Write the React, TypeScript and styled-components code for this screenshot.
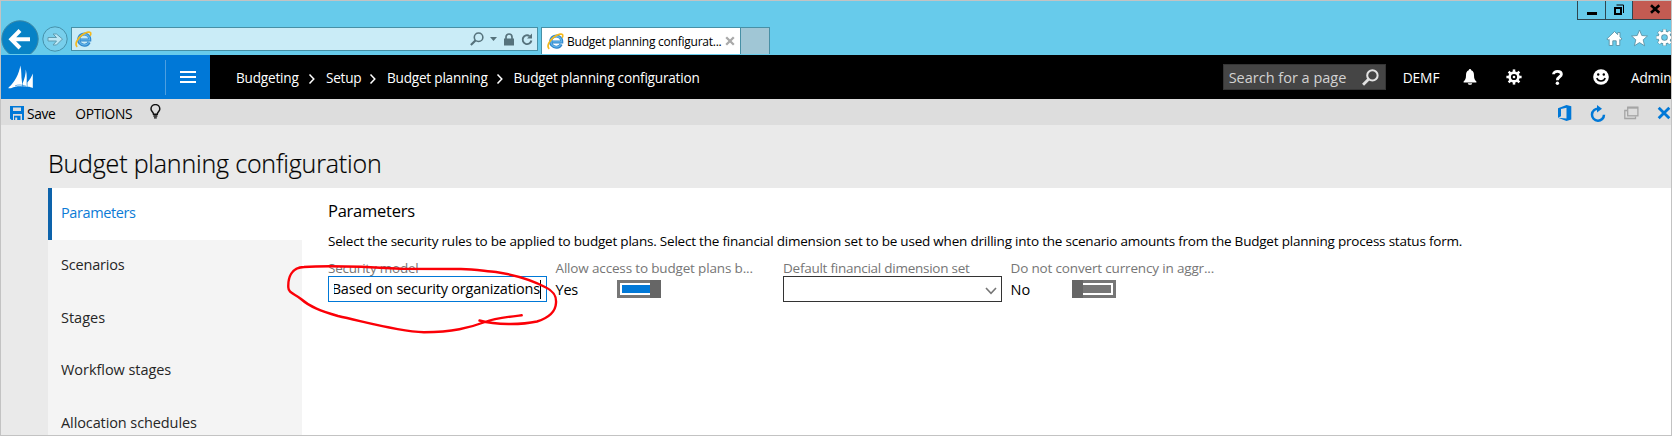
import React from 'react';
import styled, { createGlobalStyle } from 'styled-components';

const Global = createGlobalStyle`
  * { box-sizing: border-box; }
  body { margin: 0; overflow: hidden; }
  svg { display: block; flex: none; }
`;

const Window = styled.div`
  position: relative;
  display: flex;
  flex-direction: column;
  width: 1672px;
  height: 436px;
  overflow: hidden;
  border: 1px solid #c3c3c3;
  background: #eaeaea;
  color: #000;
  font-family: 'Open Sans', 'Noto Sans', sans-serif;
  white-space: nowrap;
`;

const Text = styled.span<{ $size?: number; $track?: number; $line?: number; $color?: string }>`
  font-size: ${(p) => p.$size ?? 14}px;
  letter-spacing: ${(p) => p.$track ?? 0}px;
  line-height: ${(p) => p.$line ?? 20}px;
  color: ${(p) => p.$color ?? 'inherit'};
`;

/* Browser chrome */
const Browser = styled.header`
  display: flex;
  flex: none;
  height: 54px;
  background: #67cbeb;
`;
const NavButtons = styled.div`
  width: 70px;
  padding-top: 18px;
`;
const AddressBar = styled.div`
  display: flex;
  align-items: center;
  width: 467px;
  height: 24px;
  margin-top: 26px;
  padding: 0 4px 0 3px;
  border: 1px solid #4790a6;
  background: #caecf7;
`;
const AddressTools = styled.div`
  display: flex;
  align-items: center;
  gap: 6px;
  margin-left: auto;
`;
const Tab = styled.div`
  display: flex;
  align-items: center;
  width: 200px;
  height: 27px;
  margin: 26px 0 0 3px;
  padding-left: 5px;
  border: 1px solid #4790a6;
  border-bottom: 0;
  background: #fff;
`;
const TabTitle = styled(Text)`
  width: 158px;
  margin-left: 3px;
  padding-top: 1px;
`;
const NewTab = styled.div`
  width: 29px;
  height: 27px;
  margin-top: 26px;
  border: 1px solid #4790a6;
  border-width: 1px 1px 0 0;
  background: #a0c6d5;
`;
const Corner = styled.div`
  display: flex;
  flex-direction: column;
  align-items: flex-end;
  margin-left: auto;
`;
const WindowButtons = styled.div`
  display: flex;
  height: 19px;
  border-left: 1px solid #2e4650;
  border-bottom: 1px solid #2e4650;
`;
const WindowButton = styled.div<{ $w: number; $close?: boolean }>`
  display: flex;
  align-items: center;
  justify-content: center;
  width: ${(p) => p.$w}px;
  padding-left: ${(p) => (p.$close ? 5 : 0)}px;
  background: ${(p) => (p.$close ? '#c35b52' : 'transparent')};
  & + & { border-left: 1px solid #2e4650; }
`;
const BrowserTools = styled.div`
  display: flex;
  gap: 8px;
  margin: 9px -2px 0 0;
`;

/* Application header */
const AppBar = styled.div`
  display: flex;
  flex: none;
  align-items: center;
  height: 44px;
  background: #000;
  color: #fff;
`;
const Brand = styled.div`
  display: flex;
  align-items: center;
  width: 209px;
  height: 44px;
  padding-left: 7px;
  background: #0078d7;
`;
const BrandDivider = styled.div`
  width: 1px;
  height: 35px;
  margin: 0 14px 0 131px;
  background: #4d9fe0;
`;
const Crumbs = styled.nav`
  display: flex;
  align-items: center;
  padding: 1px 0 0 26px;
`;
const Crumb = styled(Text)<{ $w: number }>`
  width: ${(p) => p.$w}px;
`;
const SearchBox = styled.div`
  display: flex;
  align-items: center;
  justify-content: space-between;
  width: 163px;
  height: 26px;
  margin: 0 17px 0 auto;
  padding: 0 6px 0 5px;
  border: 1px solid #353535;
  background: #454545;
`;
const SearchHint = styled(Text)`
  padding-top: 1px;
`;
const Company = styled(Text)`
  width: 45px;
  padding-top: 1px;
`;
const IconSlot = styled.div`
  display: flex;
  flex: none;
  justify-content: center;
  width: 43.6px;
  padding-left: 1px;
`;
const User = styled(Text)`
  width: 40px;
  margin-left: 9px;
  padding-top: 1px;
  letter-spacing: -0.2px;
`;

/* Action bar */
const ActionBar = styled.div`
  display: flex;
  flex: none;
  align-items: center;
  height: 26px;
  padding: 2px 0 0 9px;
  background: #ddd;
`;
const Action = styled(Text)<{ $ml: number }>`
  margin-left: ${(p) => p.$ml}px;
  padding-top: 1px;
`;
const Bulb = styled.div`
  margin: -3px 0 0 18px;
`;
const FormTools = styled.div`
  display: flex;
  align-items: center;
  gap: 18px;
  margin: 0 0 0 auto;
`;

/* Page */
const Title = styled.h1`
  flex: none;
  margin: 21px 0 8px 47px;
  font-size: 25px;
  font-weight: 300;
  line-height: 34px;
  letter-spacing: -0.18px;
  -webkit-text-stroke: 0.2px #000;
`;
const Body = styled.div`
  display: flex;
  flex: 1;
  min-height: 0;
  margin-left: 47px;
  background: #fff;
`;
const SideNav = styled.nav`
  flex: none;
  width: 254px;
  height: 300px;
`;
const NavItem = styled.div<{ $active?: boolean }>`
  display: flex;
  align-items: center;
  height: ${(p) => (p.$active ? 52 : 52.6)}px;
  padding: 0 0 2.5px ${(p) => (p.$active ? 9 : 13)}px;
  border-left: ${(p) => (p.$active ? '4px solid #0d63ab' : '0')};
  background: ${(p) => (p.$active ? '#fff' : '#f4f4f4')};
  color: ${(p) => (p.$active ? '#0c7bd6' : '#262626')};
`;
const Content = styled.main`
  flex: 1;
  padding: 11px 0 0 26px;
`;
const Heading = styled.h2`
  margin: 0 0 8px;
  font-size: 16.5px;
  font-weight: 400;
  line-height: 24px;
  letter-spacing: -0.25px;
`;
const Description = styled.p`
  margin: 0 0 9px;
  font-size: 13.5px;
  line-height: 20px;
  letter-spacing: -0.21px;
`;
const Fields = styled.div`
  display: grid;
  grid-template-columns: repeat(4, 219px);
  column-gap: 8.5px;
`;
const Field = styled.div`
  display: flex;
  flex-direction: column;
`;
const Label = styled(Text)`
  height: 16px;
  font-size: 13.5px;
  line-height: 17px;
  color: #767676;
`;
const TextInput = styled.div`
  display: flex;
  align-items: center;
  height: 26px;
  padding: 0 5px 0 5px;
  border: 1px solid #0078d7;
`;
const InputClip = styled.div`
  display: flex;
  align-items: center;
  justify-content: flex-end;
  width: 207px;
  overflow: hidden;
`;
const Caret = styled.i`
  flex: none;
  width: 1px;
  height: 19px;
  background: #000;
`;
const Select = styled.div`
  display: flex;
  align-items: center;
  justify-content: flex-end;
  height: 26px;
  padding: 4px 4px 0 0;
  border: 1px solid #333;
`;
const ToggleRow = styled.div`
  display: flex;
  align-items: center;
  height: 26px;
`;
const ToggleText = styled(Text)`
  width: 61.5px;
  padding-top: 1px;
`;
const Switch = styled.div<{ $on?: boolean }>`
  display: flex;
  flex-direction: ${(p) => (p.$on ? 'row' : 'row-reverse')};
  align-items: center;
  width: 44px;
  height: 18px;
  padding: ${(p) => (p.$on ? '0 0 0 3px' : '0 3px 0 0')};
  background: #767676;
`;
const SwitchTrack = styled.div<{ $on?: boolean }>`
  flex: 1;
  height: 12px;
  border: 2px solid #fff;
  border-width: ${(p) => (p.$on ? '2px 0 2px 2px' : '2px 2px 2px 0')};
  background: ${(p) => (p.$on ? '#0078d7' : '#767676')};
`;
const SwitchKnob = styled.div`
  width: 11px;
  height: 18px;
  background: #666;
`;
const Ink = styled.svg`
  position: absolute;
  left: 280px;
  top: 255.5px;
`;

const IeLogo = () => (
  <svg width="17" height="17" viewBox="0 0 17 17" fill="none">
    <path d="M14.2 11.2A5.6 5.6 0 1 1 14.8 8.9H5.2" stroke="#2f86cb" strokeWidth="3" />
    <path d="M13.9 11.3A5.3 5.3 0 1 1 14.6 8.8H5.4" stroke="#62b4ea" strokeWidth="1.3" />
    <path d="M2.3 15.8C-.7 13.6 2.1 7.3 7.4 3.7C11.3 1 15.6.2 15.8 2.2C15.9 3 15.6 3.9 15.1 4.7" stroke="#f5b91c" strokeWidth="1.7" />
  </svg>
);

const Magnifier = ({ size, color, weight }: { size: number; color: string; weight: number }) => (
  <svg width={size} height={size} viewBox="0 0 16 16" fill="none" stroke={color}>
    <circle cx="9.8" cy="6" r="4.9" strokeWidth={weight} />
    <path d="M6.2 9.6L1 14.9" strokeWidth={weight + 0.7} />
  </svg>
);

const gearTeeth = [0, 45, 90, 135, 180, 225, 270, 315];
const Gear = ({ size, outline }: { size: number; outline?: string }) => (
  <svg width={size} height={size} viewBox="0 0 16 16" fill="none">
    {outline && (
      <g stroke={outline}>
        <circle cx="8" cy="8" r="4.5" strokeWidth="4.4" />
        {gearTeeth.map((a) => (
          <path key={a} d="M8 4V0" strokeWidth="3.6" transform={`rotate(${a} 8 8)`} />
        ))}
      </g>
    )}
    <g stroke="#fff">
      <circle cx="8" cy="8" r="4.4" strokeWidth="2.6" />
      {gearTeeth.map((a) => (
        <path key={a} d="M8 4V.4" strokeWidth="2.5" transform={`rotate(${a} 8 8)`} />
      ))}
    </g>
    {!outline && <circle cx="8" cy="8" r="1.3" fill="#fff" />}
  </svg>
);

const CrumbArrow = () => (
  <svg width="27" height="12" viewBox="0 0 27 12" fill="none">
    <path d="M10.5 2.5L14.8 7L10.5 11.5" stroke="#fff" strokeWidth="1.5" />
  </svg>
);

const App = () => (
  <>
    <Global />
    <Window>
      <Browser>
        <NavButtons>
          <svg width="70" height="35" viewBox="0 0 70 35" fill="none">
            <circle cx="19" cy="20" r="18.2" fill="#0782c6" stroke="#3c87a5" strokeWidth="1" />
            <path d="M29 20.3H11M19 11.5L10.3 20.3L19 29" stroke="#fff" strokeWidth="4" />
            <circle cx="54" cy="20" r="12.2" fill="#78cfec" stroke="#4591aa" />
            <path d="M47 18.5H55.5L52 15H55.5L61.5 20L55.5 26H52L55.5 22H47Z" fill="#bce7f5" stroke="#5f9cb0" />
          </svg>
        </NavButtons>
        <AddressBar>
          <IeLogo />
          <AddressTools>
            <Magnifier size={14} color="#56727c" weight={1.8} />
            <svg width="7" height="4" viewBox="0 0 7 4"><path d="M0 0H7L3.5 4Z" fill="#56727c" /></svg>
            <svg width="12" height="13" viewBox="0 0 12 13" fill="none">
              <rect x="1" y="5.5" width="10" height="7" fill="#56727c" />
              <path d="M3 6V4A3 3 0 0 1 9 4V6" stroke="#56727c" strokeWidth="1.7" />
            </svg>
            <svg width="12" height="13" viewBox="0 0 12 13" fill="none">
              <path d="M8.5 3A4.4 4.4 0 1 0 10.4 7.5" stroke="#56727c" strokeWidth="1.9" />
              <path d="M6 5.5H11V.5Z" fill="#56727c" />
            </svg>
          </AddressTools>
        </AddressBar>
        <Tab>
          <IeLogo />
          <TabTitle $size={12} $track={-0.24}>Budget planning configurat...</TabTitle>
          <svg width="10" height="10" viewBox="0 0 10 10"><path d="M1.2 1.2L8.8 8.8M8.8 1.2L1.2 8.8" stroke="#a9a9a9" strokeWidth="2.3" /></svg>
        </Tab>
        <NewTab />
        <Corner>
          <WindowButtons>
            <WindowButton $w={27}><svg width="10" height="15"><rect y="9" width="10" height="3" /></svg></WindowButton>
            <WindowButton $w={27}>
              <svg width="10" height="12" viewBox="0 0 10 12" fill="none" stroke="#000">
                <path d="M2.5 1H9.5V9" />
                <rect x="1" y="4" width="6" height="6" strokeWidth="2" />
              </svg>
            </WindowButton>
            <WindowButton $w={39} $close>
              <svg width="16" height="12" viewBox="0 0 16 12"><path d="M4 1.3L12.3 8.8M12.3 1.3L4 8.8" stroke="#000" strokeWidth="2.6" /></svg>
            </WindowButton>
          </WindowButtons>
          <BrowserTools>
            <svg width="17" height="18" viewBox="0 0 17 18" fill="#fff" stroke="#5b93a6" strokeWidth="0.9">
              <path d="M8.5 2.5L11.7 5.6V3.5H14V7.8L16 10L14.5 11L13.8 10.4V16.5H10.2V11.8H6.8V16.5H3.2V10.4L2.3 11L.8 10Z" />
            </svg>
            <svg width="17" height="18" viewBox="0 0 17 18">
              <path d="M8.5 1L10.8 6.5L16.5 7L12.2 10.8L13.6 16.8L8.5 13.6L3.4 16.8L4.8 10.8L.5 7L6.2 6.5Z" fill="#fff" stroke="#5b93a6" strokeWidth="0.9" />
            </svg>
            <Gear size={17} outline="#5b93a6" />
          </BrowserTools>
        </Corner>
      </Browser>

      <AppBar>
        <Brand>
          <svg width="26" height="24" viewBox="0 0 26 24" fill="#fff">
            <path d="M12.3.5C11 9 7 17 .8 22.3L.3 23.2H3C8 21 11.5 21 14.5 21.5L14 17C13 11 13.8 6 12.3.5Z" />
            <path d="M17.8 4.5C17.8 9 16.5 14 14.6 18.5L15 21.2L18.8 21.8C18.4 16 19.4 10 17.8 4.5Z" />
            <path d="M24.8 8.5C23.5 12 21.5 15 19.4 17.5V21.8C21 21.5 23 22.3 24.8 23Z" />
            <path d="M7 20.9C10 19.4 14 19.8 18 21.2" fill="none" stroke="#0078d7" strokeWidth=".6" />
          </svg>
          <BrandDivider />
          <svg width="16" height="12" viewBox="0 0 16 12"><path d="M0 1H16M0 6H16M0 11H16" stroke="#fff" strokeWidth="2" /></svg>
        </Brand>
        <Crumbs>
          <Crumb $size={13.6} $track={-0.2} $w={63}>Budgeting</Crumb>
          <CrumbArrow />
          <Crumb $size={13.6} $track={-0.25} $w={34}>Setup</Crumb>
          <CrumbArrow />
          <Crumb $size={13.6} $track={-0.22} $w={99.5}>Budget planning</Crumb>
          <CrumbArrow />
          <Crumb $size={13.6} $track={-0.21} $w={190}>Budget planning configuration</Crumb>
        </Crumbs>
        <SearchBox>
          <SearchHint $size={14.5} $color="#d2d2d2">Search for a page</SearchHint>
          <Magnifier size={17} color="#e2e2e2" weight={1.9} />
        </SearchBox>
        <Company $size={13.8} $track={-0.1}>DEMF</Company>
        <IconSlot>
          <svg width="14" height="16" viewBox="0 0 14 16" fill="#fff">
            <path d="M7 0C7.8 0 8.2.6 8.2 1.3C10.5 2 11 4 11 6.5C11 10 12 11.3 13.4 12.5V13.5H.6V12.5C2 11.3 3 10 3 6.5C3 4 3.5 2 5.8 1.3C5.8.6 6.2 0 7 0Z" />
            <path d="M4.8 14.2H9.2C9 15.3 8.2 15.8 7 15.8S5 15.3 4.8 14.2Z" />
          </svg>
        </IconSlot>
        <IconSlot><Gear size={16} /></IconSlot>
        <IconSlot>
          <svg width="11" height="15" viewBox="0 0 11 15" fill="none">
            <path d="M1.5 4.2C1.5.5 9.4.4 9.4 4.3C9.4 7 5.4 6.6 5.4 10.3" stroke="#fff" strokeWidth="2.8" />
            <circle cx="5.4" cy="13.2" r="1.7" fill="#fff" />
          </svg>
        </IconSlot>
        <IconSlot>
          <svg width="16" height="16" viewBox="0 0 16 16" fill="none">
            <circle cx="8" cy="8" r="7.8" fill="#fff" />
            <circle cx="5.2" cy="5.5" r="1.2" fill="#000" />
            <circle cx="10.8" cy="5.5" r="1.2" fill="#000" />
            <path d="M3.8 9C5 13 11 13 12.2 9" stroke="#000" strokeWidth="1.5" />
          </svg>
        </IconSlot>
        <User $size={13.6}>Admin</User>
      </AppBar>

      <ActionBar>
        <svg width="14" height="14" viewBox="0 0 14 14">
          <path d="M0 0H14V14H12V8H3V14H1.5L0 12.5Z" fill="#0078d7" />
          <path d="M3 1.5H11V5H3Z" fill="#ddd" />
          <path d="M4 9.7H10.5V14H7.2V11.5H5.2V14H4Z" fill="#0078d7" />
        </svg>
        <Action $size={13.8} $track={-0.4} $ml={3}>Save</Action>
        <Action $size={13.8} $track={-0.3} $ml={20}>OPTIONS</Action>
        <Bulb>
          <svg width="11" height="15" viewBox="0 0 11 15" fill="none" stroke="#111">
            <path d="M3.5 10.2C3.5 8 1 7.5 1 5A4.3 4.3 0 0 1 9.8 5C9.8 7.5 7.3 8 7.3 10.2Z" strokeWidth="1.5" />
            <path d="M3.4 12H7.4M4 13.8H6.8" strokeWidth="1.3" />
          </svg>
        </Bulb>
        <FormTools>
          <svg width="14" height="16" viewBox="0 0 14 16" fill="#0078d7">
            <path fillRule="evenodd" d="M0 3.3L8.5 0L13.3 1.3V14.5L8.5 16L0 12.7L8.5 13.6V2.7L3 4V11.2L0 12.7Z" />
          </svg>
          <svg width="16" height="17" viewBox="0 0 16 17" fill="none">
            <path d="M8.5 3.7A6 6 0 1 0 14 9.7" stroke="#0078d7" strokeWidth="2.5" />
            <path d="M7 0L12 3.8L7 7.6Z" fill="#0078d7" />
          </svg>
          <svg width="15" height="14" viewBox="0 0 15 14" fill="none" stroke="#a5a5a5">
            <path d="M3 4.5H.8V12.5H11.5V10.5" strokeWidth="1.3" />
            <rect x="3.7" y="1.2" width="10.2" height="8.6" strokeWidth="1.3" />
            <path d="M3.5 1.8H14" strokeWidth="1.8" />
          </svg>
          <svg width="14" height="14" viewBox="0 0 14 14"><path d="M1.7 1.7L12.3 12.3M12.3 1.7L1.7 12.3" stroke="#0078d7" strokeWidth="2.8" /></svg>
        </FormTools>
      </ActionBar>

      <Title>Budget planning configuration</Title>
      <Body>
        <SideNav>
          <NavItem $active><Text $size={14.5} $track={-0.4}>Parameters</Text></NavItem>
          <NavItem><Text $size={14.5} $track={-0.2}>Scenarios</Text></NavItem>
          <NavItem><Text $size={14.5}>Stages</Text></NavItem>
          <NavItem><Text $size={14.5} $track={-0.05}>Workflow stages</Text></NavItem>
          <NavItem><Text $size={14.5} $track={-0.1}>Allocation schedules</Text></NavItem>
        </SideNav>
        <Content>
          <Heading>Parameters</Heading>
          <Description>
            Select the security rules to be applied to budget plans. Select the financial dimension set to be used when drilling into the scenario amounts from the Budget planning process status form.
          </Description>
          <Fields>
            <Field>
              <Label $track={-0.22}>Security model</Label>
              <TextInput>
                <InputClip>
                  <Text $size={14.5} $track={-0.2}>Based on security organizations</Text>
                  <Caret />
                </InputClip>
              </TextInput>
            </Field>
            <Field>
              <Label $track={-0.16}>Allow access to budget plans b...</Label>
              <ToggleRow>
                <ToggleText $size={14.5} $track={-0.2}>Yes</ToggleText>
                <Switch $on><SwitchTrack $on /><SwitchKnob /></Switch>
              </ToggleRow>
            </Field>
            <Field>
              <Label $track={-0.25}>Default financial dimension set</Label>
              <Select>
                <svg width="12" height="8" viewBox="0 0 12 8" fill="none"><path d="M1 1L6 6.3L11 1" stroke="#767676" strokeWidth="1.6" /></svg>
              </Select>
            </Field>
            <Field>
              <Label $track={-0.16}>Do not convert currency in aggr...</Label>
              <ToggleRow>
                <ToggleText $size={14.5}>No</ToggleText>
                <Switch><SwitchTrack /><SwitchKnob /></Switch>
              </ToggleRow>
            </Field>
          </Fields>
        </Content>
      </Body>

      <Ink width="285" height="85" viewBox="280 256 285 85" fill="none">
        <path
          d="M520.7 314.3C505 316 494 317 484 321C468 327 452 331 423 331.3C395 330 365 321 337 315C320 310 309 306 300 298C294 293 287 292 287.3 286C287 277 290 266.5 303 266C330 264 370 266 400 267.7L460 268C475 268 485 270.5 495 271C515 274 533 280 545 286.5C554 291 555.5 296 555 302C554.5 312 547 317 536 320.5C520 324 495 324 478.5 319.5"
          stroke="#fb0007" strokeWidth="2.4" strokeLinecap="round" strokeLinejoin="round"
        />
      </Ink>
    </Window>
  </>
);

export default App;
